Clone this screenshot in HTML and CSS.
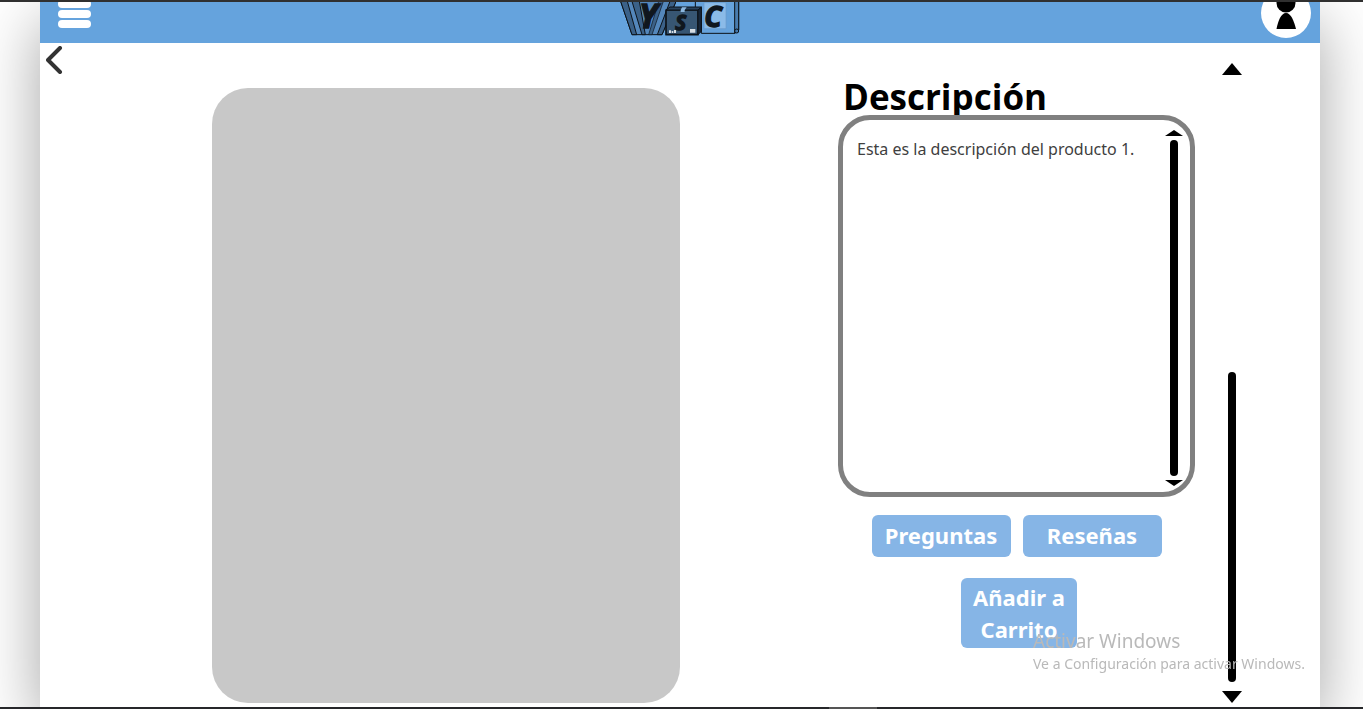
FILE: index.html
```html
<!DOCTYPE html>
<html lang="es">
<head>
<meta charset="utf-8">
<title>Descripción del producto</title>
<link rel="stylesheet" href="styles.css">
</head>
<body>
<div class="screen">
  <div class="app">
    <header class="topbar">
      <button class="menu" type="button" aria-label="Menú"><span></span><span></span><span></span></button>
      <svg class="logo" viewBox="30 6 360 102" role="img" aria-label="YSC">
        <g stroke="#0c1218" stroke-width="3" stroke-linejoin="round">
          <path d="M32 4 66 104H156L198 4Z" fill="#5487bb"/>
          <path d="M32 4 66 104H80L52 4ZM66 4 96 104H106L88 4ZM180 4 142 104H156L198 4Z" fill="#3b6188"/>
          <path d="M146 4 116 104H126L160 4Z" fill="#3b6188" stroke-width="2"/>
          <path d="M256 4V24H274V100H374L386 90V4Z" fill="#66a3dc"/>
          <path d="M374 4V100L386 90V4Z" fill="#497daf"/>
          <path d="M282 8H348V86H282Z" fill="#8bbbe8" stroke="#6b9cca" stroke-width="2"/>
          <path d="M168 30H264V104H168Z" fill="#375673" stroke-width="5"/>
          <path d="M264 30 274 21V94L264 104Z" fill="#172638"/>
          <path d="M168 30 180 21H274L264 30Z" fill="#29435d"/>
        </g>
        <path d="M216 22H230L224 30V36H212V30Z" fill="#8db8df"/>
        <path d="M177 91H183V99H177ZM185 93H190V99H185ZM192 90H198V99H192ZM240 87H256V98H240Z" fill="#d6dde3"/>
        <circle cx="380" cy="93" r="6" fill="#4479ad" stroke="#0c1218" stroke-width="3"/>
        <g class="logo-letters">
          <text x="86" y="84" font-size="100">Y</text>
          <text x="196" y="91" font-size="62">S</text>
          <text x="283" y="80" font-size="86">C</text>
        </g>
      </svg>
      <button class="profile" type="button" aria-label="Perfil">
        <svg viewBox="0 0 50 50" aria-hidden="true"><circle cx="25" cy="15" r="9.5"/><path d="M15.5 41C17 33 20 25 25 25S33 33 35 41Z"/></svg>
      </button>
    </header>
    <main class="product">
      <button class="back" type="button" aria-label="Volver"><svg viewBox="0 0 17 28" aria-hidden="true"><path d="M14 2 2 14 14 26"/></svg></button>
      <div class="picture"></div>
      <section class="details">
        <h1>Descripción</h1>
        <div class="description">
          <p>Esta es la descripción del producto 1.</p>
          <div class="scroll scroll-small">
            <i class="up"></i><i class="thumb"></i><i class="down"></i>
          </div>
        </div>
        <div class="actions">
          <button type="button">Preguntas</button>
          <button type="button">Reseñas</button>
        </div>
        <button class="add" type="button">Añadir a Carrito</button>
      </section>
      <div class="scroll scroll-page">
        <i class="up"></i><i class="thumb"></i><i class="down"></i>
      </div>
    </main>
  </div>
  <aside class="watermark"><strong>Activar Windows</strong><span>Ve a Configuración para activar Windows.</span></aside>
  <div class="taskbar"><span></span></div>
</div>
</body>
</html>
```
FILE: styles.css
```css
* { box-sizing: border-box; }
body {
  margin: 0;
  background: #fff;
  color: #000;
  font-family: "Noto Sans", "Open Sans", sans-serif;
}
button {
  margin: 0;
  padding: 0;
  border: 0;
  background: none;
  font-family: inherit;
  cursor: pointer;
}
.screen {
  display: flex;
  flex-direction: column;
  min-height: 100vh;
  overflow: hidden;
  border-top: 2px solid #303030;
}
.app {
  flex: 1;
  display: flex;
  flex-direction: column;
  margin: 0 43px 0 40px;
  background: #fff;
  box-shadow: 0 20px 60px rgba(0, 0, 0, 0.36);
}
.topbar {
  display: grid;
  grid-template-columns: 1fr auto 1fr;
  grid-template-rows: 100%;
  align-items: end;
  height: 41px;
  padding: 0 9px 5px;
  background: #65a3dd;
  overflow: hidden;
}
.menu {
  display: grid;
  gap: 2px;
  width: 33px;
  margin: 0 0 10px 9px;
}
.menu span {
  height: 8px;
  border-radius: 4px;
  background: #fff;
}
.logo {
  width: 120px;
  height: 34px;
  margin-bottom: 2px;
}
.logo-letters {
  fill: #10171e;
  stroke: #10171e;
  stroke-width: 4px;
  font-family: "Noto Sans", sans-serif;
  font-style: italic;
  font-weight: bold;
}
.profile {
  justify-self: end;
  width: 50px;
  height: 50px;
  border-radius: 50%;
  background: #fff;
}
.profile svg { display: block; }
.product {
  flex: 1;
  display: grid;
  grid-template-columns: 172fr 468fr 158fr 357fr 27fr 98fr;
}
.back {
  place-self: start;
  width: 17px;
  height: 28px;
  margin: 3px 0 0 6px;
}
.back svg {
  display: block;
  fill: none;
  stroke: #333;
  stroke-width: 4;
  stroke-linecap: round;
  stroke-linejoin: round;
}
.picture {
  margin: 45px 0 4px;
  border-radius: 36px;
  background: #c8c8c8;
}
.details {
  grid-column: 4;
  display: flex;
  flex-direction: column;
  align-items: center;
  padding-top: 35px;
}
.details h1 {
  align-self: stretch;
  margin: 0;
  padding-left: 5px;
  font: 700 35px/37px "Open Sans", sans-serif;
}
.description {
  align-self: stretch;
  display: flex;
  justify-content: space-between;
  min-height: 382px;
  padding: 10px 7px 6px 14px;
  border: 5px solid #808080;
  border-radius: 32px;
  background: #fff;
}
.description p {
  margin: 7px 0 0;
  color: #404040;
  font-size: 16px;
  line-height: 24px;
}
.scroll {
  display: flex;
  flex-direction: column;
  align-items: center;
}
.scroll i { background: #000; }
.scroll .up { clip-path: polygon(50% 0, 100% 100%, 0 100%); }
.scroll .down { clip-path: polygon(0 0, 100% 0, 50% 100%); }
.scroll .thumb {
  flex: 1;
  width: 8px;
  border-radius: 4px;
}
.scroll-small { gap: 4px; }
.scroll-small .up,
.scroll-small .down { width: 18px; height: 6px; }
.scroll-page {
  grid-column: 6;
  width: 20px;
  padding: 20px 0 4px;
}
.scroll-page .up,
.scroll-page .down { width: 20px; height: 12px; }
.scroll-page .thumb { margin: 297px 0 9px; }
.actions {
  display: flex;
  gap: 12px;
  margin-top: 18px;
}
.actions button,
.add {
  border-radius: 6px;
  background: #86b5e6;
  color: #fff;
  font-size: 22px;
  font-weight: bold;
  line-height: 32px;
}
.actions button {
  width: 139px;
  height: 42px;
  padding-bottom: 2px;
}
.add {
  width: 116px;
  height: 70px;
  margin: 21px 0 0 5px;
}
.watermark {
  position: fixed;
  right: 55px;
  bottom: 34px;
  display: grid;
  width: 275px;
  color: #b9b9b9;
  font-size: 14px;
  line-height: 22px;
  white-space: nowrap;
  pointer-events: none;
}
.watermark strong {
  font-size: 19px;
  font-weight: normal;
  line-height: 24px;
}
.taskbar {
  height: 2px;
  padding-left: 829px;
  background: #26272a;
}
.taskbar span {
  display: block;
  width: 48px;
  height: 2px;
  background: #555;
}
```
